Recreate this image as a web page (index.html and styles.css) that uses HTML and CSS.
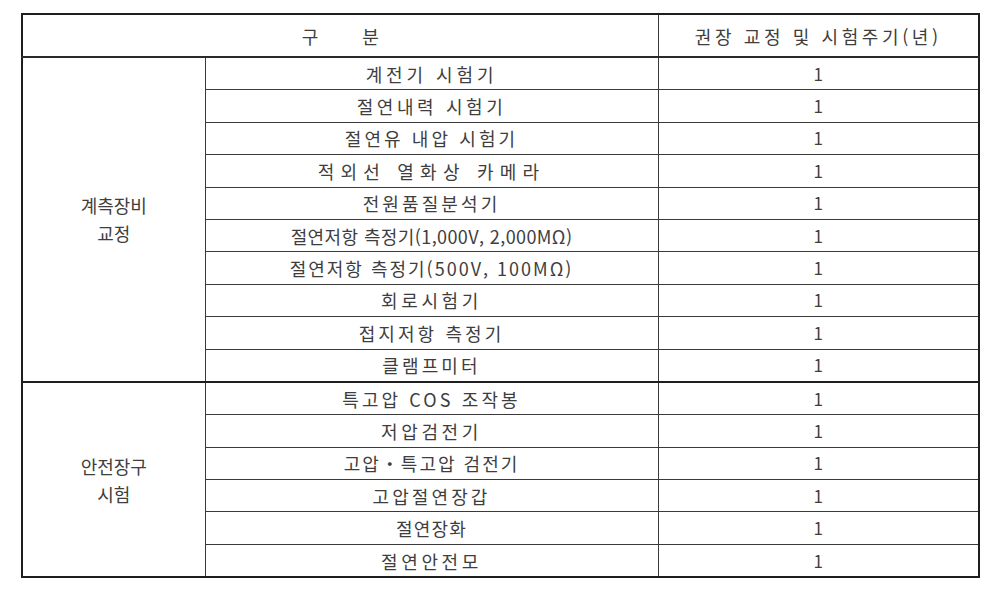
FILE: index.html
```html
<!DOCTYPE html>
<html lang="ko">
<head>
<meta charset="utf-8">
<title>권장 교정 및 시험주기</title>
<link rel="stylesheet" href="styles.css">
</head>
<body>
<div class="wrap">
<table class="cal">
  <colgroup>
    <col class="c1"><col class="c2"><col class="c3">
  </colgroup>
  <thead>
    <tr class="head">
      <th colspan="2" class="h-gubun">구 분</th>
      <th class="h-cycle">권장 교정 및 시험주기(년)</th>
    </tr>
  </thead>
  <tbody class="grp g1">
    <tr>
      <td rowspan="10" class="label">계측장비<br>교정</td>
      <td class="item ls5">계전기 시험기</td><td class="num">1</td>
    </tr>
    <tr><td class="item ls45">절연내력 시험기</td><td class="num">1</td></tr>
    <tr><td class="item ls4">절연유 내압 시험기</td><td class="num">1</td></tr>
    <tr><td class="item ls7">적외선 열화상 카메라</td><td class="num">1</td></tr>
    <tr><td class="item ls4">전원품질분석기</td><td class="num">1</td></tr>
    <tr><td class="item ls1">절연저항 측정기(1,000V, 2,000MΩ)</td><td class="num">1</td></tr>
    <tr><td class="item ls3">절연저항 측정기(500V, 100MΩ)</td><td class="num">1</td></tr>
    <tr><td class="item ls45">회로시험기</td><td class="num">1</td></tr>
    <tr><td class="item ls4">접지저항 측정기</td><td class="num">1</td></tr>
    <tr><td class="item ls4">클램프미터</td><td class="num">1</td></tr>
  </tbody>
  <tbody class="grp g2">
    <tr>
      <td rowspan="6" class="label">안전장구<br>시험</td>
      <td class="item ls4">특고압 COS 조작봉</td><td class="num">1</td>
    </tr>
    <tr><td class="item ls45">저압검전기</td><td class="num">1</td></tr>
    <tr><td class="item ls3">고압・특고압 검전기</td><td class="num">1</td></tr>
    <tr><td class="item ls4">고압절연장갑</td><td class="num">1</td></tr>
    <tr><td class="item ls2">절연장화</td><td class="num">1</td></tr>
    <tr><td class="item ls45">절연안전모</td><td class="num">1</td></tr>
  </tbody>
</table>
</div>
</body>
</html>
```
FILE: styles.css
```css
html, body {
  margin: 0;
  padding: 0;
  background: #ffffff;
}

.wrap {
  padding: 13px 0 0 21px;
}

.cal {
  border-collapse: collapse;
  table-layout: fixed;
  width: 957px;
  border: 2px solid #1e1e1e;
  font-family: "Noto Sans CJK KR", "Noto Sans", sans-serif;
  font-size: 18px;
  color: #3e3e3e;
}

.c1 { width: 183px; }
.c2 { width: 453px; }
.c3 { width: 321px; }

.cal th,
.cal td {
  border: 1px solid #3a3a3a;
  padding: 0;
  text-align: center;
  vertical-align: middle;
  font-weight: normal;
  line-height: 20px;
}

.head th {
  height: 41px;
  border-bottom: 2px solid #2a2a2a;
}

.h-gubun {
  word-spacing: 39px;
  padding-right: 4px;
}

.h-cycle {
  letter-spacing: 3.6px;
}

.grp td {
  height: 31.4px;
}

.g1 {
  border-bottom: 2px solid #1e1e1e;
}

.cal .label {
  line-height: 28px;
  letter-spacing: 0;
}

.num {
  font-size: 17px;
}

.ls1 { letter-spacing: 0.4px; }
.ls2 { letter-spacing: 1.2px; }
.ls3 { letter-spacing: 2px; }
.ls4 { letter-spacing: 3.1px; }
.ls45 { letter-spacing: 3.6px; }
.ls5 { letter-spacing: 3.9px; }
.ls7 { letter-spacing: 6.2px; }
```
